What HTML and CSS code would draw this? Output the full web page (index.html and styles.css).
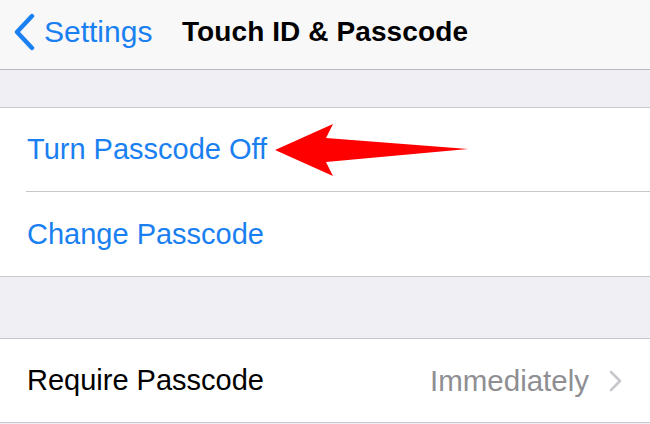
FILE: index.html
```html
<!DOCTYPE html>
<html lang="en">
<head>
    <meta charset="UTF-8">
    <meta name="viewport" content="width=device-width, initial-scale=1.0">
    <title>Touch ID &amp; Passcode</title>
    <link rel="stylesheet" href="styles.css">
</head>
<body>
    <div class="screen">
        <div class="nav-bar">
            <div class="back-button">
                <svg class="back-chevron" width="24" height="38" viewBox="0 0 24 38">
                    <polyline points="20,3 5,19 20,35" fill="none" stroke="#1a7ff0" stroke-width="4.4" stroke-linecap="round" stroke-linejoin="round"/>
                </svg>
                <span>Settings</span>
            </div>
            <div class="nav-title">Touch ID &amp; Passcode</div>
            <div></div>
        </div>

        <div class="spacer spacer-top"></div>

        <div class="group">
            <div class="row">
                <span class="row-label link">Turn Passcode Off</span>
            </div>
            <div class="row">
                <span class="row-label link">Change Passcode</span>
            </div>
        </div>

        <div class="spacer spacer-mid"></div>

        <div class="group">
            <div class="row">
                <span class="row-label">Require Passcode</span>
                <span class="row-value">Immediately</span>
                <svg class="disclosure" width="14" height="22" viewBox="0 0 14 22">
                    <polyline points="2,2 11,11 2,20" fill="none" stroke="#c7c7cc" stroke-width="2.6" stroke-linecap="round" stroke-linejoin="round"/>
                </svg>
            </div>
        </div>

        <!-- red arrow pointing at "Turn Passcode Off" -->
        <svg class="pointer-arrow" width="650" height="424" viewBox="0 0 650 424">
            <polygon points="275,150 333,124 326,138 468,149 326,162 333,176" fill="#ff0000"/>
        </svg>
    </div>
</body>
</html>
```

FILE: styles.css
```css
/* ベース */
body {
    margin: 0;
    padding: 0;
    background-color: #efeff4;
    font-family: "Liberation Sans", Arial, sans-serif;
    color: #000;
}
.screen {
    position: relative;
    width: 650px;
    height: 424px;
    overflow: hidden;
}

/* ナビゲーションバー */
.nav-bar {
    display: grid;
    grid-template-columns: 1fr auto 1fr;
    align-items: center;
    box-sizing: border-box;
    height: 70px;
    padding-bottom: 5px;
    background-color: #f8f8f8;
    border-bottom: 1px solid #b9b9bd;
}
.back-button {
    display: flex;
    align-items: center;
    padding-left: 12px;
    color: #1a7ff0;
    font-size: 30px;
}
.back-chevron {
    margin-right: 8px;
}
.nav-title {
    font-size: 28px;
    font-weight: bold;
    letter-spacing: 0.1px;
}

/* セクション間の余白 */
.spacer-top {
    height: 37px;
}
.spacer-mid {
    height: 61px;
}

/* グループ */
.group {
    background-color: #fff;
    border-top: 1px solid #c8c7cc;
    border-bottom: 1px solid #c8c7cc;
    padding-left: 26px;
}
.row {
    display: flex;
    align-items: center;
    height: 83px;
    padding-left: 1px;
    padding-right: 27px;
    font-size: 29px;
}
.row + .row {
    border-top: 1px solid #c8c7cc;
    height: 84px;
}
.row-label {
    flex: 1;
}
.link {
    color: #1a7ff0;
}
.row-value {
    color: #8e8e93;
    font-size: 29.5px;
    margin-right: 20px;
}

/* 矢印（画面の上に重ねる） */
.pointer-arrow {
    position: absolute;
    left: 0;
    top: 0;
    pointer-events: none;
}
```
